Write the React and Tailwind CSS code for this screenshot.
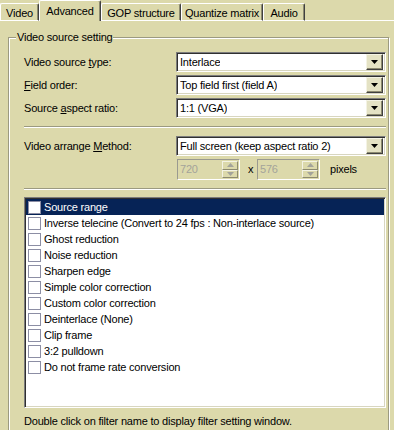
import React from 'react'

const TABS = [
  { label: 'Video', w: 39 },
  { label: 'Advanced', w: 62, active: true },
  { label: 'GOP structure', w: 80 },
  { label: 'Quantize matrix', w: 82 },
  { label: 'Audio', w: 42 },
]

const FILTERS = [
  'Source range',
  'Inverse telecine (Convert to 24 fps : Non-interlace source)',
  'Ghost reduction',
  'Noise reduction',
  'Sharpen edge',
  'Simple color correction',
  'Custom color correction',
  'Deinterlace (None)',
  'Clip frame',
  '3:2 pulldown',
  'Do not frame rate conversion',
]

function DropButton() {
  return (
    <div className="w-[17px] h-[16px] bg-[#e4e2c4] border border-t-[#f4f3e4] border-l-[#f4f3e4] border-r-[#404040] border-b-[#404040] shadow-[inset_-1px_-1px_0_#8c8a70] flex items-center justify-center">
      <svg width="7" height="4" viewBox="0 0 7 4">
        <path d="M0 0h7L3.5 4z" fill="#000" />
      </svg>
    </div>
  )
}

function Combo({ value }) {
  return (
    <div className="w-[210px] h-[20px] bg-white border border-t-[#7c7c7c] border-l-[#7c7c7c] border-r-white border-b-white shadow-[inset_1px_1px_0_#303030,inset_-1px_-1px_0_#d8d6c0] flex items-center justify-between pl-[3px] pr-[2px]">
      <span className="truncate">{value}</span>
      <DropButton />
    </div>
  )
}

function Spin({ value }) {
  return (
    <div className="w-[63px] h-[21px] border border-t-[#9a9a90] border-l-[#9a9a90] border-r-white border-b-white grid grid-cols-[1fr_16px] pr-[1px] py-[1px]">
      <span className="pl-[2px] text-[#a3a39a] leading-[17px]">{value}</span>
      <div className="grid grid-rows-2">
        <div className="border border-t-[#f4f3e4] border-l-[#f4f3e4] border-r-[#8c8a70] border-b-[#8c8a70] flex items-center justify-center">
          <svg width="7" height="4" viewBox="0 0 7 4"><path d="M0 4h7L3.5 0z" fill="#a3a39a" /></svg>
        </div>
        <div className="border border-t-[#f4f3e4] border-l-[#f4f3e4] border-r-[#8c8a70] border-b-[#8c8a70] flex items-center justify-center">
          <svg width="7" height="4" viewBox="0 0 7 4"><path d="M0 0h7L3.5 4z" fill="#a3a39a" /></svg>
        </div>
      </div>
    </div>
  )
}

function Separator() {
  return <div className="h-[2px] border-t border-t-[#9c9a80] border-b border-b-white" />
}

function Row({ children, value }) {
  return (
    <div className="flex items-center h-[20px]">
      <div className="w-[152px] shrink-0">{children}</div>
      <Combo value={value} />
    </div>
  )
}

export default function App() {
  return (
    <div className="w-[394px] h-[430px] overflow-hidden bg-[#dcd9ab] text-black text-[11px] leading-[13px] tracking-[-0.2px] font-['Liberation_Sans',Arial,sans-serif]">
      {/* tab strip */}
      <div className="flex items-end h-[21px]">
        {TABS.map((t) =>
          t.active ? (
            <div
              key={t.label}
              style={{ width: t.w }}
              className="h-[21px] relative z-10 bg-[#dcd9ab] border-t border-l border-white border-r border-r-[#404040] shadow-[inset_-1px_0_0_#8c8a70] rounded-t-[2px] flex justify-center pt-[4px]"
            >
              {t.label}
            </div>
          ) : (
            <div
              key={t.label}
              style={{ width: t.w }}
              className="h-[18px] border-t border-l border-white border-r border-r-[#404040] shadow-[inset_-1px_0_0_#8c8a70] border-b border-b-white rounded-t-[2px] flex justify-center pt-[3px]"
            >
              {t.label}
            </div>
          )
        )}
        <div className="flex-1 border-b border-b-white" />
      </div>

      {/* group box */}
      <div className="relative mt-[16px] ml-[8px] w-[381px] h-[420px] border border-[#9c9a80] shadow-[1px_1px_0_white,inset_1px_1px_0_white]">
        <span className="absolute left-[7px] top-[-7px] px-[1px] bg-[#dcd9ab]">Video source setting</span>

        <div className="pl-[15px] pr-[2px] pt-[14px] flex flex-col">
          <div className="flex flex-col gap-[3px]">
            <Row value="Interlace">Video source <u>t</u>ype:</Row>
            <Row value="Top field first (field A)"><u>F</u>ield order:</Row>
            <Row value="1:1 (VGA)">Source <u>a</u>spect ratio:</Row>
          </div>

          <div className="mt-[8px]"><Separator /></div>

          <div className="mt-[8px]">
            <Row value="Full screen (keep aspect ratio 2)">Video arrange <u>M</u>ethod:</Row>
          </div>

          <div className="mt-[3px] h-[21px] grid grid-cols-[153px_63px_17px_63px_1fr] items-center">
            <div />
            <Spin value="720" />
            <span className="pl-[8px]">x</span>
            <Spin value="576" />
            <span className="pl-[10px]">pixels</span>
          </div>

          <div className="mt-[8px]"><Separator /></div>

          {/* filter list */}
          <div className="mt-[7px] h-[211px] bg-white border border-t-[#7c7c7c] border-l-[#7c7c7c] border-r-white border-b-white shadow-[inset_1px_1px_0_#303030,inset_-1px_-1px_0_#d8d6c0] p-[1px]">
            {FILTERS.map((f, i) => (
              <div
                key={f}
                className={`h-[16px] flex items-center pl-[2px] whitespace-nowrap ${i === 0 ? 'bg-[#062356] text-white' : ''}`}
              >
                <span className="w-[13px] h-[13px] bg-white border border-[#8c8ea4] mr-[3px] shrink-0" />
                {f}
              </div>
            ))}
          </div>

          <div className="mt-[7px]">Double click on filter name to display filter setting window.</div>
        </div>
      </div>
    </div>
  )
}
